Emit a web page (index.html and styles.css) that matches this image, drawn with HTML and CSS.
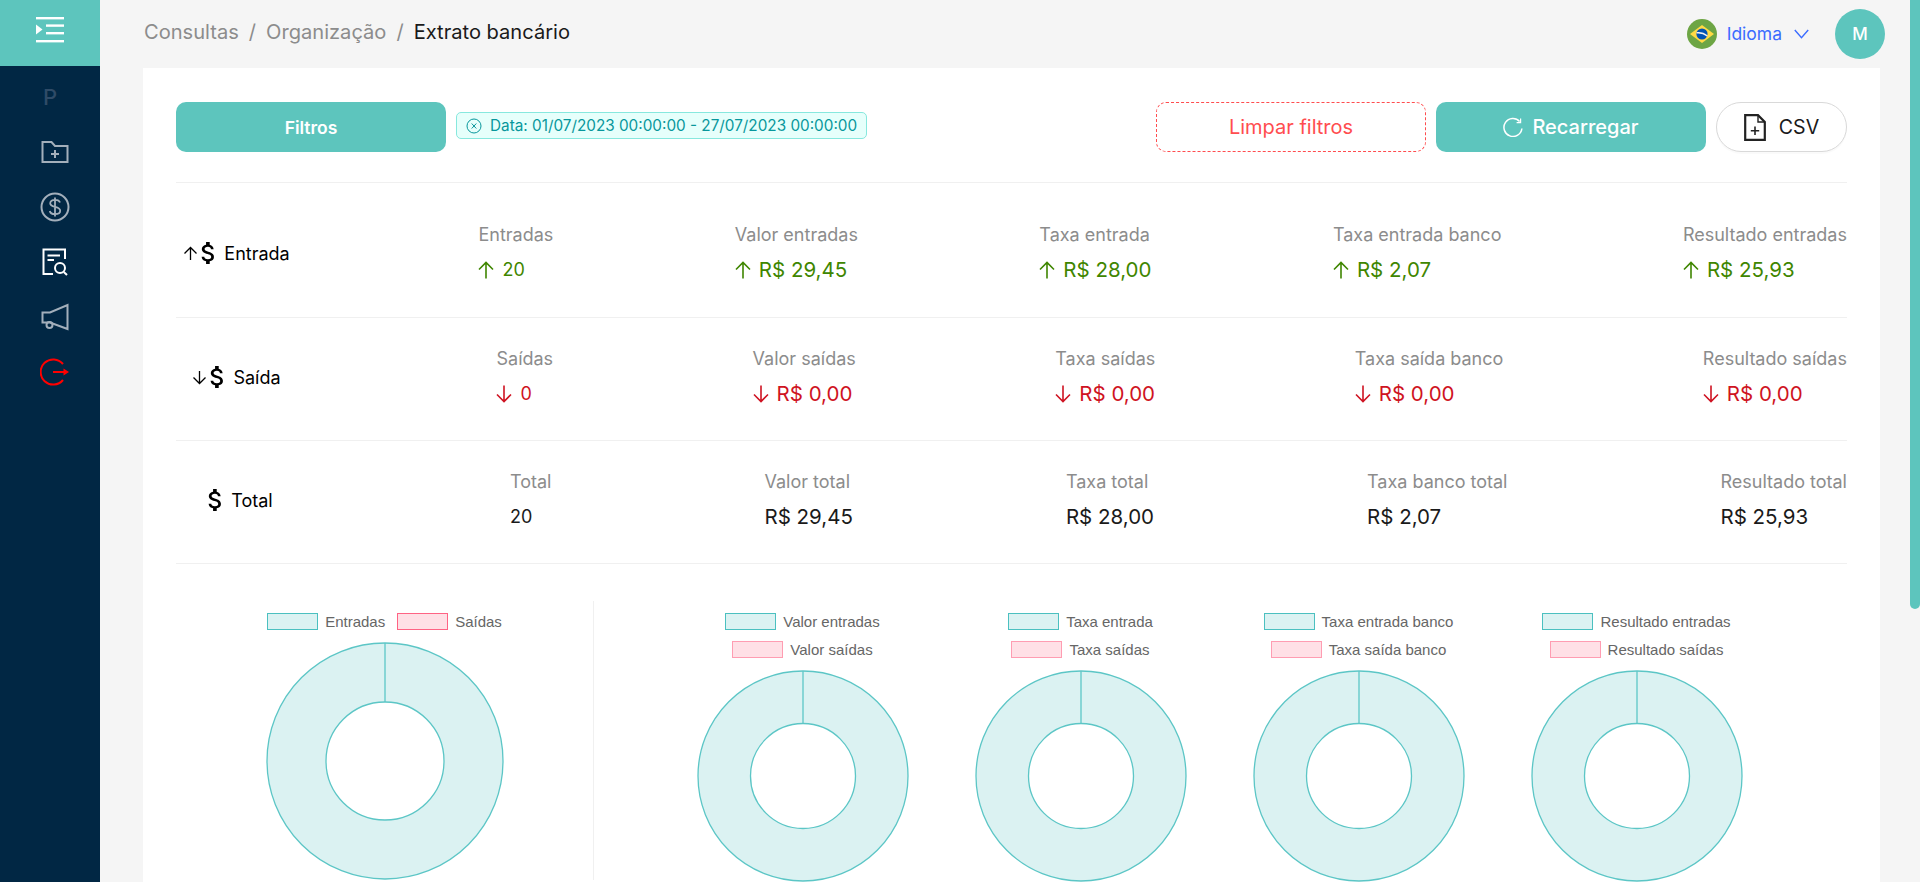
FILE: index.html
```html
<!DOCTYPE html>
<html lang="pt-BR">
<head>
    <meta charset="UTF-8">
    <meta name="viewport" content="width=device-width, initial-scale=1.0">
    <link rel="stylesheet" href="styles.css">
    <title>Extrato bancário</title>
</head>
<body>
<div class="app">
    <!-- Sidebar -->
    <aside class="sidebar">
        <div class="menu-toggle">
            <svg width="28" height="26" viewBox="0 0 28 26" fill="#fff">
                <rect x="0" y="0" width="28" height="2.4"/>
                <rect x="10" y="7.4" width="18" height="2.4"/>
                <rect x="10" y="15" width="18" height="2.4"/>
                <rect x="0" y="23" width="28" height="2.4"/>
                <path d="M0 7.5 L6.5 12.5 L0 17.5 Z"/>
            </svg>
        </div>
        <nav class="nav">
            <div class="nav-item nav-letter">P</div>
            <div class="nav-item nav-icon">
                <svg width="28" height="24" viewBox="0 0 28 24" fill="none" stroke="#a3afbb" stroke-width="2">
                    <path d="M1.5 2 H10.5 L14 6 H26.5 V22 H1.5 Z"/>
                    <path d="M14 10 V18 M10 14 H18"/>
                </svg>
            </div>
            <div class="nav-item nav-icon">
                <svg width="30" height="30" viewBox="0 0 30 30" fill="none" stroke="#a3afbb">
                    <circle cx="15" cy="15" r="13.5" stroke-width="2"/>
                    <path stroke-width="1.8" d="M20 10.6 C19.4 8.6 17.4 7.8 15 7.8 C12.2 7.8 10.2 9.2 10.2 11.3 C10.2 16.2 20.2 13.6 20.2 18.8 C20.2 21 18 22.2 15 22.2 C12.2 22.2 10.2 21 9.8 19 M15 5.5 V24.5"/>
                </svg>
            </div>
            <div class="nav-item nav-icon">
                <svg width="26" height="28" viewBox="0 0 26 28" fill="none" stroke="#fff" stroke-width="2">
                    <path d="M23 11 V1.5 H1.5 V26 H11"/>
                    <path d="M5.5 7.5 H18 M5.5 12 H12"/>
                    <circle cx="18" cy="20" r="5"/>
                    <path d="M21.8 24 L25 27"/>
                </svg>
            </div>
            <div class="nav-item nav-icon">
                <svg width="28" height="28" viewBox="0 0 28 28" fill="none" stroke="#a3afbb" stroke-width="2">
                    <path d="M26.5 2 V26 L9 19.5 H1.5 V9.5 H9 Z"/>
                    <circle cx="8.5" cy="22" r="3"/>
                </svg>
            </div>
            <div class="nav-item nav-icon">
                <svg width="29" height="28" viewBox="0 0 29 28" fill="none" stroke="#f00" stroke-width="2">
                    <path d="M23 6 A12.6 12.6 0 1 0 23 22"/>
                    <path d="M13 14 H26"/>
                    <path d="M23.5 10.5 L29 14 L23.5 17.5 Z" fill="#f00" stroke="none"/>
                </svg>
            </div>
        </nav>
    </aside>

    <main class="main">
        <!-- Top bar -->
        <header class="topbar">
            <div class="breadcrumb">
                <span>Consultas</span><span class="sep">/</span><span>Organização</span><span class="sep">/</span><span class="current">Extrato bancário</span>
            </div>
            <div class="topbar-right">
                <svg class="flag" width="30" height="30" viewBox="0 0 30 30">
                    <circle cx="15" cy="15" r="15" fill="#6da544"/>
                    <path d="M15 6 L27 15 L15 24 L3 15 Z" fill="#ffda44"/>
                    <circle cx="15" cy="15" r="5.6" fill="#0052b4"/>
                    <path d="M9.6 13.8 C13 13.4 17.4 14.6 20.3 17" fill="none" stroke="#f0f0f0" stroke-width="1.4"/>
                </svg>
                <span class="lang">Idioma</span>
                <svg class="chevron" width="15" height="10" viewBox="0 0 15 10" fill="none" stroke="#3b6cff" stroke-width="1.4">
                    <path d="M0.8 1 L7.5 8.6 L14.2 1"/>
                </svg>
                <div class="avatar">M</div>
            </div>
        </header>

        <section class="card">
            <!-- Filters and actions -->
            <div class="toolbar">
                <button class="btn btn-primary btn-filter">Filtros</button>
                <span class="chip">
                    <svg width="16" height="16" viewBox="0 0 16 16" fill="none" stroke="#08979c" stroke-width="1">
                        <circle cx="8" cy="8" r="7"/>
                        <path d="M5.7 5.5 L10.3 10.5 M10.3 5.5 L5.7 10.5"/>
                    </svg>
                    Data: 01/07/2023 00:00:00 - 27/07/2023 00:00:00
                </span>
                <div class="toolbar-actions">
                    <button class="btn btn-dashed">Limpar filtros</button>
                    <button class="btn btn-primary btn-reload">
                        <svg width="20" height="20" viewBox="0 0 20 20" fill="none" stroke="#fff" stroke-width="1.5">
                            <path d="M16.6 4.4 A9 9 0 1 0 18.9 11.5"/>
                            <path d="M17.6 1.6 V5.6 H13.6" stroke-width="1.2"/>
                        </svg>
                        Recarregar
                    </button>
                    <button class="btn btn-csv">
                        <svg width="22" height="27" viewBox="0 0 22 27" fill="none" stroke="#222" stroke-width="2.2">
                            <path d="M1.2 1.2 H14 L20.8 8 V25.8 H1.2 Z"/>
                            <path d="M14 1.2 V8 H20.8" stroke-width="1.4"/>
                            <path d="M11 12.5 V21 M6.8 16.8 H15.2" stroke-width="1.6"/>
                        </svg>
                        CSV
                    </button>
                </div>
            </div>

            <!-- Entrada -->
            <div class="stat-row stat-row-first">
                <div class="row-label">
                    <svg class="small-arrow" width="15" height="15" viewBox="0 0 15 15" fill="none" stroke="#000" stroke-width="1.3"><path d="M7.5 14 V1.5 M1.5 7.5 L7.5 1.5 L13.5 7.5"/></svg>
                    <svg class="dollar" width="17" height="26" viewBox="5 3 14 18"><path d="M11.8 10.9c-2.27-.59-3-1.2-3-2.15 0-1.09 1.01-1.85 2.7-1.85 1.78 0 2.44.85 2.5 2.1h2.21c-.07-1.72-1.12-3.3-3.21-3.81V3h-3v2.16c-1.94.42-3.5 1.68-3.5 3.61 0 2.31 1.91 3.46 4.7 4.13 2.5.6 3 1.48 3 2.41 0 .69-.49 1.79-2.7 1.79-2.06 0-2.87-.92-2.98-2.1h-2.2c.12 2.19 1.76 3.42 3.68 3.83V21h3v-2.15c1.95-.37 3.5-1.5 3.5-3.55 0-2.84-2.43-3.81-4.7-4.4z"/></svg>
                    <span>Entrada</span>
                </div>
                <div class="stat"><div class="stat-title">Entradas</div><div class="stat-value small up"><svg class="arrow" width="16" height="18" viewBox="0 0 16 18"><path d="M8 17.5 V1.5 M1 8.5 L8 1.5 L15 8.5"/></svg>20</div></div>
                <div class="stat"><div class="stat-title">Valor entradas</div><div class="stat-value up"><svg class="arrow" width="16" height="18" viewBox="0 0 16 18"><path d="M8 17.5 V1.5 M1 8.5 L8 1.5 L15 8.5"/></svg>R$ 29,45</div></div>
                <div class="stat"><div class="stat-title">Taxa entrada</div><div class="stat-value up"><svg class="arrow" width="16" height="18" viewBox="0 0 16 18"><path d="M8 17.5 V1.5 M1 8.5 L8 1.5 L15 8.5"/></svg>R$ 28,00</div></div>
                <div class="stat"><div class="stat-title">Taxa entrada banco</div><div class="stat-value up"><svg class="arrow" width="16" height="18" viewBox="0 0 16 18"><path d="M8 17.5 V1.5 M1 8.5 L8 1.5 L15 8.5"/></svg>R$ 2,07</div></div>
                <div class="stat"><div class="stat-title">Resultado entradas</div><div class="stat-value up"><svg class="arrow" width="16" height="18" viewBox="0 0 16 18"><path d="M8 17.5 V1.5 M1 8.5 L8 1.5 L15 8.5"/></svg>R$ 25,93</div></div>
            </div>

            <!-- Saída -->
            <div class="stat-row">
                <div class="row-label">
                    <svg class="small-arrow" width="15" height="15" viewBox="0 0 15 15" fill="none" stroke="#000" stroke-width="1.3"><path d="M7.5 1 V13.5 M1.5 7.5 L7.5 13.5 L13.5 7.5"/></svg>
                    <svg class="dollar" width="17" height="26" viewBox="5 3 14 18"><path d="M11.8 10.9c-2.27-.59-3-1.2-3-2.15 0-1.09 1.01-1.85 2.7-1.85 1.78 0 2.44.85 2.5 2.1h2.21c-.07-1.72-1.12-3.3-3.21-3.81V3h-3v2.16c-1.94.42-3.5 1.68-3.5 3.61 0 2.31 1.91 3.46 4.7 4.13 2.5.6 3 1.48 3 2.41 0 .69-.49 1.79-2.7 1.79-2.06 0-2.87-.92-2.98-2.1h-2.2c.12 2.19 1.76 3.42 3.68 3.83V21h3v-2.15c1.95-.37 3.5-1.5 3.5-3.55 0-2.84-2.43-3.81-4.7-4.4z"/></svg>
                    <span>Saída</span>
                </div>
                <div class="stat"><div class="stat-title">Saídas</div><div class="stat-value small down"><svg class="arrow" width="16" height="18" viewBox="0 0 16 18"><path d="M8 0.5 V16.5 M1 9.5 L8 16.5 L15 9.5"/></svg>0</div></div>
                <div class="stat"><div class="stat-title">Valor saídas</div><div class="stat-value down"><svg class="arrow" width="16" height="18" viewBox="0 0 16 18"><path d="M8 0.5 V16.5 M1 9.5 L8 16.5 L15 9.5"/></svg>R$ 0,00</div></div>
                <div class="stat"><div class="stat-title">Taxa saídas</div><div class="stat-value down"><svg class="arrow" width="16" height="18" viewBox="0 0 16 18"><path d="M8 0.5 V16.5 M1 9.5 L8 16.5 L15 9.5"/></svg>R$ 0,00</div></div>
                <div class="stat"><div class="stat-title">Taxa saída banco</div><div class="stat-value down"><svg class="arrow" width="16" height="18" viewBox="0 0 16 18"><path d="M8 0.5 V16.5 M1 9.5 L8 16.5 L15 9.5"/></svg>R$ 0,00</div></div>
                <div class="stat"><div class="stat-title">Resultado saídas</div><div class="stat-value down"><svg class="arrow" width="16" height="18" viewBox="0 0 16 18"><path d="M8 0.5 V16.5 M1 9.5 L8 16.5 L15 9.5"/></svg>R$ 0,00</div></div>
            </div>

            <!-- Total -->
            <div class="stat-row">
                <div class="row-label row-label-total">
                    <svg class="dollar" width="17" height="26" viewBox="5 3 14 18"><path d="M11.8 10.9c-2.27-.59-3-1.2-3-2.15 0-1.09 1.01-1.85 2.7-1.85 1.78 0 2.44.85 2.5 2.1h2.21c-.07-1.72-1.12-3.3-3.21-3.81V3h-3v2.16c-1.94.42-3.5 1.68-3.5 3.61 0 2.31 1.91 3.46 4.7 4.13 2.5.6 3 1.48 3 2.41 0 .69-.49 1.79-2.7 1.79-2.06 0-2.87-.92-2.98-2.1h-2.2c.12 2.19 1.76 3.42 3.68 3.83V21h3v-2.15c1.95-.37 3.5-1.5 3.5-3.55 0-2.84-2.43-3.81-4.7-4.4z"/></svg>
                    <span>Total</span>
                </div>
                <div class="stat"><div class="stat-title">Total</div><div class="stat-value small">20</div></div>
                <div class="stat"><div class="stat-title">Valor total</div><div class="stat-value">R$ 29,45</div></div>
                <div class="stat"><div class="stat-title">Taxa total</div><div class="stat-value">R$ 28,00</div></div>
                <div class="stat"><div class="stat-title">Taxa banco total</div><div class="stat-value">R$ 2,07</div></div>
                <div class="stat"><div class="stat-title">Resultado total</div><div class="stat-value">R$ 25,93</div></div>
            </div>

            <!-- Charts -->
            <div class="charts">
                <div class="chart chart-main">
                    <div class="legend legend-inline">
                        <div class="legend-item"><i class="box box-in"></i>Entradas</div>
                        <div class="legend-item"><i class="box box-out box-strong"></i>Saídas</div>
                    </div>
                    <svg class="donut" width="238" height="238" viewBox="0 0 238 238">
                        <circle cx="119" cy="119" r="118" class="ring"/>
                        <circle cx="119" cy="119" r="59" class="hole"/>
                        <path d="M119 1 V60" class="spoke"/>
                    </svg>
                </div>
                <div class="chart-group">
                    <div class="chart">
                        <div class="legend">
                            <div class="legend-item"><i class="box box-in"></i>Valor entradas</div>
                            <div class="legend-item"><i class="box box-out"></i>Valor saídas</div>
                        </div>
                        <svg class="donut" width="212" height="212" viewBox="0 0 212 212">
                            <circle cx="106" cy="106" r="105" class="ring"/>
                            <circle cx="106" cy="106" r="52.5" class="hole"/>
                            <path d="M106 1 V53.5" class="spoke"/>
                        </svg>
                    </div>
                    <div class="chart">
                        <div class="legend">
                            <div class="legend-item"><i class="box box-in"></i>Taxa entrada</div>
                            <div class="legend-item"><i class="box box-out"></i>Taxa saídas</div>
                        </div>
                        <svg class="donut" width="212" height="212" viewBox="0 0 212 212">
                            <circle cx="106" cy="106" r="105" class="ring"/>
                            <circle cx="106" cy="106" r="52.5" class="hole"/>
                            <path d="M106 1 V53.5" class="spoke"/>
                        </svg>
                    </div>
                    <div class="chart">
                        <div class="legend">
                            <div class="legend-item"><i class="box box-in"></i>Taxa entrada banco</div>
                            <div class="legend-item"><i class="box box-out"></i>Taxa saída banco</div>
                        </div>
                        <svg class="donut" width="212" height="212" viewBox="0 0 212 212">
                            <circle cx="106" cy="106" r="105" class="ring"/>
                            <circle cx="106" cy="106" r="52.5" class="hole"/>
                            <path d="M106 1 V53.5" class="spoke"/>
                        </svg>
                    </div>
                    <div class="chart">
                        <div class="legend">
                            <div class="legend-item"><i class="box box-in"></i>Resultado entradas</div>
                            <div class="legend-item"><i class="box box-out"></i>Resultado saídas</div>
                        </div>
                        <svg class="donut" width="212" height="212" viewBox="0 0 212 212">
                            <circle cx="106" cy="106" r="105" class="ring"/>
                            <circle cx="106" cy="106" r="52.5" class="hole"/>
                            <path d="M106 1 V53.5" class="spoke"/>
                        </svg>
                    </div>
                </div>
            </div>
        </section>
    </main>

    <div class="scroll-rail"><div class="scroll-thumb"></div></div>
</div>
</body>
</html>
```

FILE: styles.css
```css
* {
    box-sizing: border-box;
}

body {
    margin: 0;
    font-family: Inter, "Liberation Sans", sans-serif;
    background-color: #f5f5f5;
    color: #000;
}

.app {
    display: flex;
    height: 882px;
    overflow: hidden;
}

/* Sidebar */
.sidebar {
    width: 100px;
    flex-shrink: 0;
    background-color: #012744;
}

.menu-toggle {
    height: 66px;
    background-color: #5dc5bd;
    display: flex;
    align-items: center;
    justify-content: center;
    padding-bottom: 6px;
}

.nav {
    padding-top: 3px;
}

.nav-item {
    height: 55px;
    display: flex;
    align-items: center;
    justify-content: center;
}

.nav-letter {
    font-size: 22px;
    font-weight: 500;
    color: #2f4b67;
}

.nav-icon {
    padding-left: 9px;
}

/* Main column */
.main {
    flex: 1;
    min-width: 0;
}

.topbar {
    height: 68px;
    padding: 0 25px 0 44px;
    display: flex;
    align-items: center;
    justify-content: space-between;
}

.breadcrumb {
    font-size: 20.1px;
    color: #8c8c8c;
    padding-bottom: 5px;
}

.breadcrumb .sep {
    margin: 0 10px;
}

.breadcrumb .current {
    color: #1a1a1a;
}

.topbar-right {
    display: flex;
    align-items: center;
}

.flag {
    margin-right: 10px;
}

.lang {
    font-size: 17.5px;
    color: #3b6cff;
    margin-right: 12px;
    padding-bottom: 2px;
}

.chevron {
    margin-right: 26px;
}

.avatar {
    width: 50px;
    height: 50px;
    border-radius: 50%;
    background-color: #5dc5bd;
    color: #fff;
    font-size: 17px;
    font-weight: 500;
    display: flex;
    align-items: center;
    justify-content: center;
}

.card {
    margin: 0 30px 0 43px;
    padding: 34px 33px 40px;
    background: #fff;
}

/* Toolbar */
.toolbar {
    display: flex;
    align-items: flex-start;
    padding-bottom: 30px;
    border-bottom: 1px solid #f0f0f0;
}

.toolbar-actions {
    margin-left: auto;
    display: flex;
    gap: 10px;
}

.btn {
    height: 50px;
    border: none;
    border-radius: 10px;
    font-family: inherit;
    font-size: 20px;
    display: flex;
    align-items: center;
    justify-content: center;
    gap: 9px;
}

.btn-primary {
    width: 270px;
    background-color: #5dc5bd;
    color: #fff;
    font-weight: 500;
}

.btn-filter {
    font-size: 17.5px;
    font-weight: 600;
}

.btn-dashed {
    width: 270px;
    background: #fff;
    border: 1px dashed #ff4d4f;
    color: #ff4d4f;
}

.btn-csv {
    width: 131px;
    background: #fff;
    border: 1px solid #d9d9d9;
    border-radius: 25px;
    color: #1a1a1a;
    gap: 13px;
    font-size: 19.6px;
    box-shadow: 0 2px 0 rgba(0, 0, 0, 0.02);
}

.chip {
    height: 27px;
    margin: 10px 0 0 10px;
    padding: 0 9px;
    display: inline-flex;
    align-items: center;
    gap: 8px;
    background-color: #e6fffb;
    border: 1px solid #87e8de;
    border-radius: 5px;
    color: #08979c;
    font-size: 15.3px;
}

/* Stat rows */
.stat-row {
    display: flex;
    align-items: center;
    justify-content: space-between;
    height: 123px;
    border-bottom: 1px solid #f0f0f0;
    padding-bottom: 4px;
}

.stat-row-first {
    height: 135px;
    padding: 6px 0 0;
}

.row-label {
    width: 121px;
    display: flex;
    align-items: center;
    justify-content: center;
    font-size: 18px;
}

.row-label-total {
    padding-left: 7px;
}

.small-arrow {
    margin-right: 2px;
}

.dollar {
    margin-right: 7px;
}

.stat-title {
    font-size: 18px;
    line-height: 24px;
    color: #8c8c8c;
    margin-bottom: 10px;
}

.stat-value {
    font-size: 20.5px;
    line-height: 26px;
    display: flex;
    align-items: center;
    color: #1a1a1a;
}

.stat-value.small {
    font-size: 18px;
}

.arrow {
    fill: none;
    stroke: currentColor;
    stroke-width: 1.6;
    margin-right: 8px;
}

.up {
    color: #3f8600;
}

.down {
    color: #cf1322;
}

/* Charts */
.charts {
    display: flex;
    height: 279px;
    margin-top: 37px;
}

.chart {
    width: 278px;
    padding-top: 12px;
    display: flex;
    flex-direction: column;
    align-items: center;
}

.chart-main {
    width: 418px;
    border-right: 1px solid #f0f0f0;
}

.chart-group {
    flex: 1;
    display: flex;
    justify-content: center;
    padding-right: 2px;
}

.legend {
    display: flex;
    flex-direction: column;
    align-items: center;
    gap: 11px;
    margin-bottom: 12px;
}

.legend-inline {
    flex-direction: row;
    gap: 12px;
}

.legend-item {
    height: 17px;
    display: flex;
    align-items: center;
    gap: 7px;
    font-family: "Liberation Sans", Arial, sans-serif;
    font-size: 15px;
    color: #666;
}

.box {
    width: 51px;
    height: 17px;
    border: 1.5px solid;
}

.box-in {
    background-color: #dbf2f2;
    border-color: #4bc0c0;
}

.box-out {
    background-color: #ffe0e6;
    border-color: #ff9db2;
}

.box-strong {
    border-color: #ff6384;
}

.donut {
    flex-shrink: 0;
}

.ring {
    fill: #dbf2f2;
    stroke: #5cc6c6;
    stroke-width: 1.3;
}

.hole {
    fill: #fff;
    stroke: #5cc6c6;
    stroke-width: 1.3;
}

.spoke {
    fill: none;
    stroke: #5cc6c6;
    stroke-width: 1.3;
}

/* Scrollbar */
.scroll-rail {
    width: 10px;
    flex-shrink: 0;
    background-color: #f5f5f5;
}

.scroll-thumb {
    height: 609px;
    background-color: #5dc5bd;
    border-radius: 0 0 5px 5px;
}
```
